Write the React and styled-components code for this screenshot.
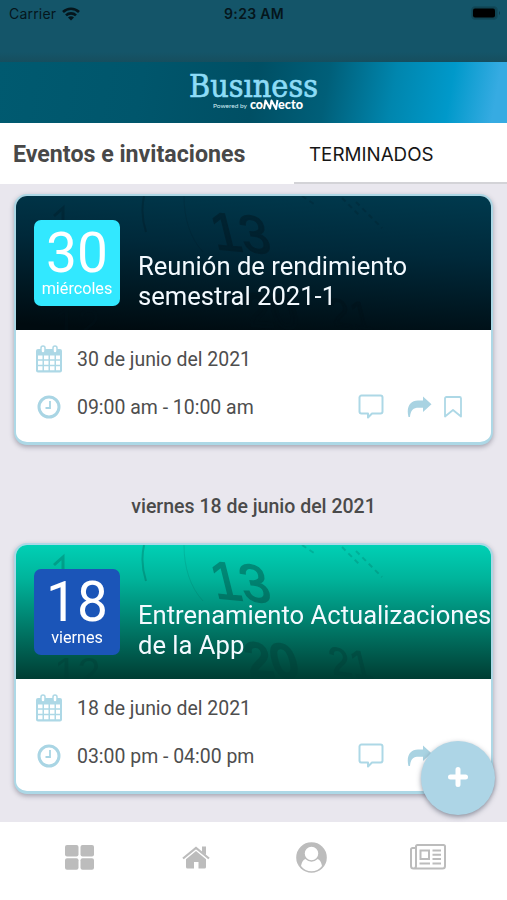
import React from 'react'
import styled, { createGlobalStyle } from 'styled-components'

const GlobalStyle = createGlobalStyle`
  * {
    box-sizing: border-box;
  }
  body {
    margin: 0;
    font-family: Roboto, sans-serif;
    background: #e9e7ee;
  }
`

const Screen = styled.div`
  width: 507px;
  height: 900px;
  display: flex;
  flex-direction: column;
  overflow: hidden;
  position: relative;
`

const StatusBar = styled.div`
  height: 62px;
  flex: none;
  display: grid;
  grid-template-columns: 1fr auto 1fr;
  align-items: start;
  padding: 4px 6px 0 9px;
  background: linear-gradient(#145569 0 84%, #164e5e);
  color: #05161c;
  font-family: Inter, sans-serif;
  font-size: 14px;
  line-height: 20px;
`

const Carrier = styled.div`
  display: flex;
  align-items: center;
  gap: 6px;
  letter-spacing: 0.2px;
`

const Time = styled.div`
  font-weight: 600;
  letter-spacing: 0.3px;
  margin-right: 2px;
`

const Battery = styled.svg`
  justify-self: end;
  margin-top: 1px;
`

const Header = styled.header`
  height: 61px;
  flex: none;
  display: flex;
  justify-content: center;
  background: linear-gradient(100deg, #005a70 0%, #00566c 28%, #004f64 50%, #005f79 64%, #0086ae 77%, #0099ca 88%, #36abe2 97%);
`

const Tabs = styled.div`
  height: 61px;
  flex: none;
  display: flex;
  background: #fff;
`

const Tab = styled.div`
  display: flex;
  align-items: center;
  width: ${(props) => (props.$active ? '294px' : '213px')};
  padding-left: ${(props) => (props.$active ? '13px' : '15px')};
  padding-top: ${(props) => (props.$active ? '0' : '4px')};
  border-bottom: ${(props) => (props.$active ? 'none' : '2px solid #d3d3d7')};
  color: ${(props) => (props.$active ? '#484848' : '#161616')};
  font-family: ${(props) => (props.$active ? 'Roboto' : 'Inter')}, sans-serif;
  font-size: ${(props) => (props.$active ? '23.2px' : '18.8px')};
  font-weight: ${(props) => (props.$active ? 700 : 400)};
`

const List = styled.main`
  flex: 1;
  min-height: 0;
  overflow: hidden;
  padding: 10px 14px 0;
  background: #e9e7ee;
`

const Card = styled.article`
  height: 251px;
  border: 2px solid #add8e6;
  border-bottom-width: 3px;
  border-radius: 13px;
  overflow: hidden;
  background: #fff;
  box-shadow: 0 2px 5px rgba(60, 60, 80, 0.4);
`

const Banner = styled.div`
  height: 133.500px;
  position: relative;
  display: flex;
  padding: 23.500px 0 0 18px;
  background: ${(props) => props.$background};
`

const BannerArt = styled.svg`
  position: absolute;
  inset: 0;
`

const DateBadge = styled.div`
  width: 86px;
  height: 86px;
  flex: none;
  position: relative;
  border-radius: 7px;
  background: ${(props) => props.$color};
  color: #fff;
  text-align: center;
`

const DayNumber = styled.div`
  height: 59px;
  font-size: 55px;
  line-height: 67px;
`

const DayName = styled.div`
  font-size: 16.2px;
  line-height: 20px;
`

const Title = styled.h2`
  position: relative;
  margin: 31px 0 0 18px;
  color: #f3faff;
  font-size: 25.6px;
  font-weight: 400;
  line-height: 30px;
  white-space: pre;
`

const Details = styled.div`
  padding: 6px 29px 0 20px;
`

const Row = styled.div`
  display: flex;
  align-items: center;
  height: 48px;
  color: #4e4e4e;
  font-size: 19.45px;
`

const RowIcon = styled.div`
  display: flex;
  justify-content: center;
  width: 26px;
  margin: 0 15px 1px 0;
`

const Actions = styled.div`
  display: flex;
  align-items: center;
  margin: 0 0 1px auto;
`

const Separator = styled.div`
  height: 98px;
  display: flex;
  align-items: center;
  justify-content: center;
  padding-top: 24px;
  color: #4a4a4a;
  font-size: 19.5px;
  font-weight: 500;
`

const AddButton = styled.button`
  position: absolute;
  right: 12px;
  top: 741px;
  width: 74px;
  height: 74px;
  display: flex;
  align-items: center;
  justify-content: center;
  padding: 0 1px 2px 0;
  border: none;
  border-radius: 50%;
  background: #add5e6;
  box-shadow: 0 2px 5px rgba(50, 60, 80, 0.5);
`

const BottomNav = styled.nav`
  height: 78px;
  flex: none;
  display: flex;
  justify-content: space-between;
  padding: 17px 61px 0 61px;
  background: #fff;
`

const NavItem = styled.div`
  display: flex;
  align-items: center;
  justify-content: center;
  width: 37px;
  height: 36px;
`

const Logo = () => (
  <svg width="150" height="55" viewBox="0 0 150 55">
    <text
      x="10"
      y="35"
      fontFamily="DejaVu Serif, serif"
      fontSize="31"
      fill="#8ddcf7"
      stroke="#8ddcf7"
      strokeWidth="0.7"
      textLength="129"
      lengthAdjust="spacingAndGlyphs"
    >
      Busıness
    </text>
    <text x="34" y="45.5" fontFamily="Lato, sans-serif" fontSize="6.5" fill="#d2edf5" textLength="34" lengthAdjust="spacingAndGlyphs">
      Powered by
    </text>
    <g fontFamily="Lato, sans-serif" fontSize="12.5" fontWeight="900" fill="#fff">
      <text x="71" y="46.5" textLength="13" lengthAdjust="spacingAndGlyphs">co</text>
      <text x="99" y="46.5" textLength="25" lengthAdjust="spacingAndGlyphs">ecto</text>
    </g>
    <path d="M85 47l1.500-8.500 4.500 8L92.500 38.500l4.500 8.500L98.500 38" stroke="#fff" strokeWidth="2" fill="none" strokeLinejoin="round" />
  </svg>
)

const CalendarIcon = () => (
  <svg width="26" height="28" viewBox="0 0 26 28">
    <path d="M2 4h22a2 2 0 0 1 2 2v19.500a2 2 0 0 1-2 2H2a2 2 0 0 1-2-2V6a2 2 0 0 1 2-2z" fill="#add8e6" />
    <path d="M2 10.500h4.500v3.800H2zM8 10.500h4.500v3.800H8zM14 10.500h4.500v3.800H14zM20 10.500h4v3.800h-4zM2 15.800h4.500v4H2zM8 15.800h4.500v4H8zM14 15.800h4.500v4H14zM20 15.800h4v4h-4zM2 21.300h4.500v4H2zM8 21.300h4.500v4H8zM14 21.300h4.500v4H14zM20 21.300h4v4h-4z" fill="#fff" />
    <rect x="5" y="1" width="4" height="7" rx="2" fill="#fff" stroke="#add8e6" strokeWidth="1.500" />
    <rect x="17" y="1" width="4" height="7" rx="2" fill="#fff" stroke="#add8e6" strokeWidth="1.500" />
  </svg>
)

const ClockIcon = () => (
  <svg width="24" height="24" viewBox="0 0 24 24" fill="none" stroke="#a9d5e4">
    <circle cx="12" cy="12" r="10" strokeWidth="3" />
    <path d="M13 6v7H8.500" strokeWidth="1.800" />
  </svg>
)

const CommentIcon = () => (
  <svg width="26" height="26" viewBox="0 0 26 26" fill="none" stroke="#add8e6" strokeWidth="2" strokeLinejoin="round">
    <path d="M3.500 1.500h19a2 2 0 0 1 2 2V17.500a2 2 0 0 1-2 2H14l-4 4v-4H3.500a2 2 0 0 1-2-2V3.500a2 2 0 0 1 2-2z" />
  </svg>
)

const ShareIcon = () => (
  <svg width="25" height="22" viewBox="0 0 25 22">
    <path d="M16 .5L24.500 8.300 16 16v-4.300h-4.500C6.500 11.700 3.500 14 3 21H1.500C-1 11 3 4.700 11 4.500h5z" fill="#a9d3e2" />
  </svg>
)

const BookmarkIcon = () => (
  <svg width="18" height="22" viewBox="0 0 18 22" fill="none" stroke="#add8e6" strokeWidth="1.800" strokeLinejoin="round">
    <path d="M2.500 1h13a1.500 1.500 0 0 1 1.500 1.500V20.500L9 14 1 20.500V2.500A1.500 1.500 0 0 1 2.500 1z" />
  </svg>
)

const Spacer = styled.div`
  width: ${(props) => props.$width}px;
`

const events = [
  {
    day: '30',
    weekday: 'miércoles',
    title: 'Reunión de rendimiento\nsemestral 2021-1',
    date: '30 de junio del 2021',
    time: '09:00 am - 10:00 am',
    color: '#32e8ff',
    background: 'linear-gradient(183deg, #003a4e 0%, #00293a 40%, #000b10 96%)',
    ink: '#001219',
  },
  {
    day: '18',
    weekday: 'viernes',
    title: 'Entrenamiento Actualizaciones\nde la App',
    date: '18 de junio del 2021',
    time: '03:00 pm - 04:00 pm',
    color: '#1b55b8',
    background: 'linear-gradient(#00d0b5 0%, #00b49b 25%, #007f6d 58%, #003d33 100%)',
    ink: '#003d36',
  },
]

const EventCard = ({ event }) => (
  <Card>
    <Banner $background={event.background}>
      <BannerArt width="476" height="134" viewBox="0 0 476 134">
        <g fill={event.ink} stroke={event.ink} opacity="0.4" fontFamily="Liberation Sans, sans-serif">
          <text transform="translate(200 53) rotate(5) skewX(19)" fontSize="52" strokeWidth="1.500">13</text>
          <text transform="translate(234 130) rotate(3) skewX(18)" fontSize="46" strokeWidth="3">20</text>
          <text transform="translate(317 129) rotate(8) skewX(22)" fontSize="38" strokeWidth="1">21</text>
          <text x="38" y="142" fontSize="42" strokeWidth="0">12</text>
        </g>
        <g stroke={event.ink} fill="none" opacity="0.25">
          <path d="M128 0c-3 14-2 24 2 36" strokeWidth="2" />
          <path d="M168 0c0 22 6 42 19 56" opacity="0.5" />
          <path d="M38 20l9-8v12" strokeWidth="3" />
          <path d="M286 0l12 8M326 2l18 18M340 6l26 26" strokeWidth="2" strokeDasharray="5 4" opacity="0.7" />
        </g>
      </BannerArt>
      <DateBadge $color={event.color}>
        <DayNumber>{event.day}</DayNumber>
        <DayName>{event.weekday}</DayName>
      </DateBadge>
      <Title>{event.title}</Title>
    </Banner>
    <Details>
      <Row>
        <RowIcon>
          <CalendarIcon />
        </RowIcon>
        {event.date}
      </Row>
      <Row>
        <RowIcon>
          <ClockIcon />
        </RowIcon>
        {event.time}
        <Actions>
          <CommentIcon />
          <Spacer $width={23} />
          <ShareIcon />
          <Spacer $width={12} />
          <BookmarkIcon />
        </Actions>
      </Row>
    </Details>
  </Card>
)

const App = () => (
  <Screen>
    <GlobalStyle />
    <StatusBar>
      <Carrier>
        Carrier
        <svg width="18" height="14" viewBox="0 0 18 14" fill="none" stroke="#05161c" strokeWidth="2.600">
          <path d="M1 5a11.500 11.500 0 0 1 16 0M4 8.400a7.200 7.200 0 0 1 10 0" />
          <path d="M9 13.500L6 10.500a4.200 4.200 0 0 1 6 0z" fill="#05161c" stroke="none" />
        </svg>
      </Carrier>
      <Time>9:23 AM</Time>
      <Battery width="30" height="16" viewBox="0 0 30 16">
        <rect x="0.500" y="1.500" width="26" height="13" rx="4" fill="#104453" stroke="#124b5c" />
        <rect x="2" y="3.500" width="22" height="9" rx="2" fill="#000" />
        <path d="M28 6q2 2 0 4z" fill="#0d3a48" />
      </Battery>
    </StatusBar>
    <Header>
      <Logo />
    </Header>
    <Tabs>
      <Tab $active>Eventos e invitaciones</Tab>
      <Tab>TERMINADOS</Tab>
    </Tabs>
    <List>
      <EventCard event={events[0]} />
      <Separator>viernes 18 de junio del 2021</Separator>
      <EventCard event={events[1]} />
    </List>
    <BottomNav>
      <NavItem>
        <svg width="29" height="25" viewBox="0 0 29 25" fill="#bcbcbc">
          <rect width="13.500" height="11.500" rx="2" />
          <rect x="15.500" width="13.500" height="11.500" rx="2" />
          <rect y="13.300" width="13.500" height="11.500" rx="2" />
          <rect x="15.500" y="13.300" width="13.500" height="11.500" rx="2" />
        </svg>
      </NavItem>
      <NavItem>
        <svg width="28" height="23" viewBox="0 0 28 23" fill="#bcbcbc">
          <path d="M14 5l10 8.200V21a1.500 1.500 0 0 1-1.500 1.500H16.500V16h-4.500v6.500H5.500A1.500 1.500 0 0 1 4 21v-7.800z" />
          <path d="M1 12.500L14 1.800l13 10.700" fill="none" stroke="#bcbcbc" strokeWidth="2.200" />
          <path d="M20 0.500h4V9l-4-3z" />
        </svg>
      </NavItem>
      <NavItem>
        <svg width="31" height="31" viewBox="0 0 31 31">
          <circle cx="15.500" cy="15.500" r="15.300" fill="#bcbcbc" />
          <path d="M5 24c1-5 3-7 6-7.500q4.500 3.500 9 0c3 .5 5 2.500 6 7.500-5 7-16 7-21 0z" fill="#fff" />
          <circle cx="15.500" cy="11.500" r="7.500" fill="#fff" stroke="#bcbcbc" strokeWidth="1.500" />
        </svg>
      </NavItem>
      <NavItem>
        <svg width="36" height="26" viewBox="0 0 36 26" fill="none" stroke="#bcbcbc" strokeWidth="2">
          <path d="M6 4H2.500A1.500 1.500 0 0 0 1 5.500V22a2.500 2.500 0 0 0 5 0V2.500A1.500 1.500 0 0 1 7.500 1h26A1.500 1.500 0 0 1 35 2.500V22a2.500 2.500 0 0 1-2.500 2.500h-29" />
          <rect x="10.500" y="6.500" width="8.500" height="8.500" />
          <path d="M22.500 6.500h8.500M22.500 10.700h8.500M22.500 15h8.500M9.500 19.500H20M22.500 19.500h8.500" />
        </svg>
      </NavItem>
    </BottomNav>
    <AddButton type="button" aria-label="add">
      <svg width="20" height="20" viewBox="0 0 20 20">
        <path d="M10 2.500v15M2.500 10h15" stroke="#fff" strokeWidth="5" strokeLinecap="round" />
      </svg>
    </AddButton>
  </Screen>
)

export default App
